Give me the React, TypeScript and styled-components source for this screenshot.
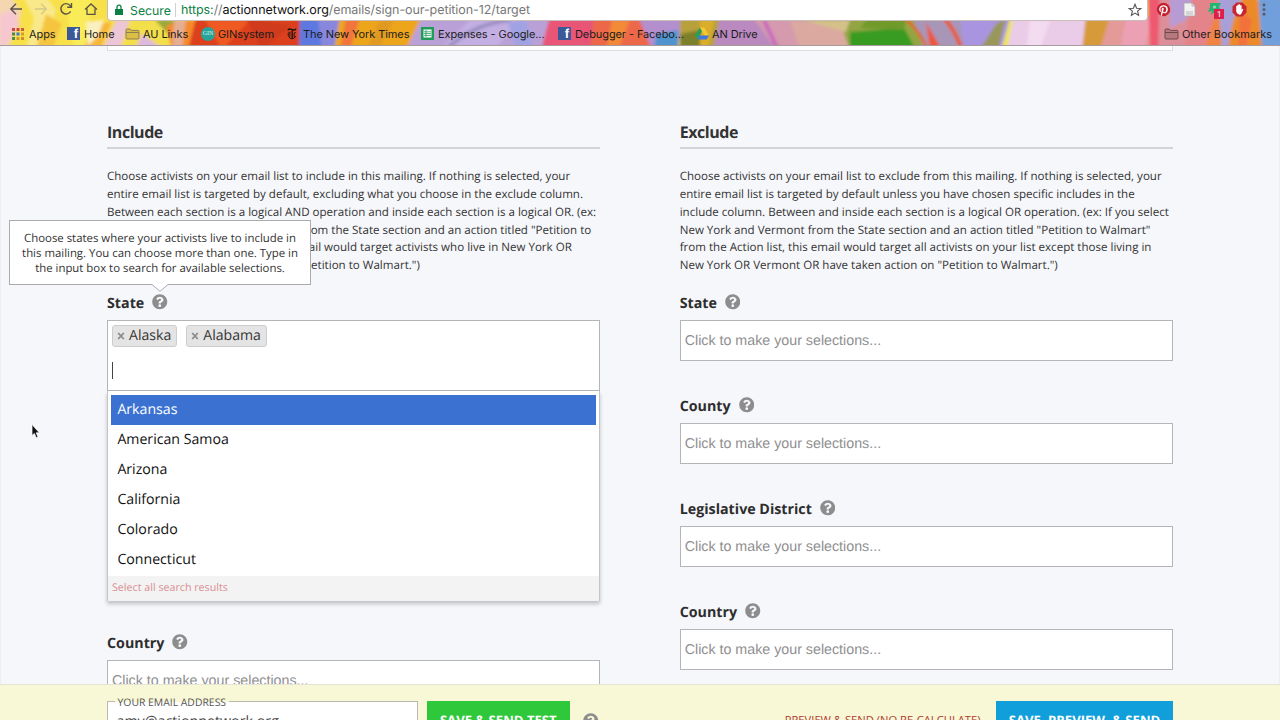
import React from 'react';
import styled, { createGlobalStyle } from 'styled-components';
import { FaQuestionCircle, FaPinterest } from 'react-icons/fa';

const Global = createGlobalStyle`
  * { box-sizing: border-box; }
  body { margin: 0; overflow: hidden; background: #f6f7fb; font-family: "Open Sans", sans-serif; color: #333; text-rendering: geometricPrecision; }
  svg { display: block; flex: none; }
`;

const Screen = styled.div`
  position: relative; width: 1280px; height: 720px; overflow: hidden;
  display: flex; flex-direction: column;
`;

/* ---------- browser chrome ---------- */
const Chrome = styled.header`
  position: relative; flex: none; height: 46px; overflow: hidden;
  border-bottom: 1px solid #a79a9c; font-family: Inter, sans-serif; color: #1c1c1c;
`;
const Theme = styled.svg` position: absolute; inset: 0; `;
const Toolbar = styled.div`
  position: relative; display: flex; height: 21px; align-items: flex-start;
`;
const NavButtons = styled.div`
  width: 107px; height: 18px; display: flex; align-items: center; gap: 9px; padding-left: 8px; flex: none;
`;
const Omnibox = styled.div`
  width: 1041px; height: 21px; background: #fff; border: 1px solid #c9bdb9; border-top: 0;
  border-radius: 0 0 4px 4px; display: flex; align-items: center; padding: 0 5px 1px 6px; flex: none;
`;
const Secure = styled.span` color: #0b8043; font-size: 12.3px; line-height: 17px; padding-top: 1px; width: 45px; margin-left: 6px; white-space: nowrap; `;
const Divider = styled.i` width: 1px; height: 14px; background: #d0d0d0; margin: 0 5px 0 0; `;
const Url = styled.span<{ $ls: number }>`
  flex: 1; font-size: 12.5px; line-height: 17px; padding-top: 1px; letter-spacing: ${p => p.$ls}px; color: #777; white-space: nowrap;
  b { font-weight: 400; color: #111; } em { font-style: normal; color: #0b8043; }
`;
const Extensions = styled.div`
  display: flex; align-items: center; gap: 9px; height: 18px; padding-left: 8px;
`;
const Bookmarks = styled.nav` position: relative; display: flex; height: 25px; padding-left: 11px; `;
const Bookmark = styled.div<{ $w?: number; $ls?: number; $end?: boolean; $gap?: number }>`
  display: flex; align-items: center; gap: ${p => p.$gap ?? 4}px; white-space: nowrap; font-size: 11px;
  width: ${p => (p.$w ? `${p.$w}px` : 'auto')}; letter-spacing: ${p => p.$ls ?? -0.09}px;
  margin-left: ${p => (p.$end ? 'auto' : 0)}; padding-right: ${p => (p.$end ? 8 : 0)}px; flex: none;
`;
const GinBadge = styled.span`
  width: 14px; height: 14px; border-radius: 50%; background: #27a39a; color: #d9f4ef;
  font: 6px/14px "Liberation Serif", serif; text-align: center; letter-spacing: 0;
`;
const FbMark = styled.span`
  width: 13px; height: 13px; background: #3b5998; color: #fff; text-align: right; padding-right: 2px;
  font: bold 13px/14px "Liberation Sans", sans-serif;
`;
const RecordBadge = styled.span`
  position: absolute; left: 7px; top: 7px; width: 10px; height: 10px; background: #dd1f4b; color: #fff;
  font: 8px/10px Inter, sans-serif; text-align: center;
`;
const ExtWrap = styled.span` position: relative; display: block; `;

/* ---------- page ---------- */
const Page = styled.main`
  flex: 1; min-height: 0; overflow: hidden; background: #f6f7fb;
  border: 0 solid #eceef4; border-width: 0 1px; padding: 0 106px;
`;
const PanelEdge = styled.div` height: 5px; background: #fff; border: 1px solid #dcdde0; border-top: 0; `;
const Columns = styled.div` display: grid; grid-template-columns: 493px 493.5px; column-gap: 79.7px; padding-top: 70px; `;
const Column = styled.section` min-width: 0; `;
const Heading = styled.h2`
  margin: 0 0 19px; height: 28px; border-bottom: 2px solid #d3d4d8; line-height: 22px;
  font-size: 16px; font-weight: 700; letter-spacing: -0.45px;
`;
const Copy = styled.p`
  margin: 0 0 17px; font-size: 11.57px; line-height: 17.85px; height: 107px; white-space: nowrap;
`;
const Line = styled.span` display: block; `;
const Label = styled.div`
  position: relative; display: flex; align-items: center; gap: 8px; height: 20px; margin-bottom: 8px; padding-top: 2px;
  font-size: 14.25px; font-weight: 700; color: #2d2d2d; width: max-content;
  svg { color: #8d8d8d; margin-top: -2px; }
`;
const Picker = styled.div`
  height: 41px; background: #fff; border: 1px solid #b4b5b9; padding: 0 4px; margin-bottom: 34px;
  font: 14.25px/40px "Liberation Sans", sans-serif; color: #8f8f8f;
`;
const OpenPicker = styled.div`
  height: 71px; background: #fff; border: 1px solid #b4b5b9; padding: 4px;
`;
const Chips = styled.div` display: flex; gap: 9px; `;
const Chip = styled.span`
  display: flex; align-items: center; gap: 4px; height: 22px; padding: 0 5px 0 4px; border: 1px solid #cdcdcd;
  border-radius: 3px; background: #e4e4e4; font-size: 14.1px; line-height: 21.5px; color: #333; white-space: nowrap;
  svg { color: #8a8a8a; margin-top: -1px; }
`;
const Caret = styled.i` display: block; width: 1px; height: 17px; background: #444; margin-top: 15px; `;
const Menu = styled.div`
  height: 210px; background: #fff; border: 1px solid #c3c4c8; border-top: 0; padding-top: 3.5px;
  box-shadow: 0 3px 4px rgba(0,0,0,.22); margin-bottom: 31px; display: flex; flex-direction: column;
`;
const Option = styled.div<{ $active?: boolean }>`
  height: 30.2px; line-height: 30.9px; margin: 0 3.5px 0 3px; padding-left: 6.4px; font-size: 14.15px;
  color: ${p => (p.$active ? '#fff' : '#111')}; background: ${p => (p.$active ? '#3b72d2' : 'transparent')};
`;
const SelectAll = styled.div`
  flex: 1; background: #f3f3f3; padding-left: 4px; font-size: 10.7px; line-height: 25.5px; color: #d98f92;
`;
const Tooltip = styled.div`
  position: absolute; left: -98px; top: -72px; width: 302px; height: 65px; background: #fff;
  border: 1px solid #ababab; padding: 9.6px 0 0; text-align: center; white-space: nowrap;
  font-size: 11.4px; font-weight: 400; line-height: 15px; color: #333;
  svg { position: absolute; left: 142px; top: 62px; margin: 0; }
`;

/* ---------- action bar ---------- */
const ActionBar = styled.footer`
  flex: none; height: 36px; background: #f8f7d6; border-top: 1px solid #e4e4d9; overflow: hidden;
  display: flex; align-items: flex-start; padding: 16px 107px 0;
`;
const EmailField = styled.div`
  width: 310.5px; height: 40px; background: #fff; border: 1px solid #b9b9b1; position: relative;
  padding: 7px 8.5px; font-size: 14.25px; line-height: 25px; color: #444; flex: none;
`;
const Legend = styled.span`
  position: absolute; left: 6.5px; top: -8px; height: 16px; line-height: 18px; padding: 0 3px; font-size: 10.4px; color: #555;
  background: linear-gradient(#f8f7d6 8px, #fff 8px); white-space: nowrap;
`;
const ActionButton = styled.div<{ $blue?: boolean }>`
  width: ${p => (p.$blue ? 177 : 143.5)}px; height: 40px; color: #fff; text-align: center; flex: none;
  background: ${p => (p.$blue ? '#109fda' : '#2fc83b')}; margin-left: ${p => (p.$blue ? 15.5 : 9)}px;
  font-weight: 700; font-size: 13.1px; line-height: 39px; white-space: nowrap;
`;
const BarHelp = styled.div` margin: 12px 0 0 13px; color: #8d8d8d; `;
const RecalcLink = styled.span` margin-left: auto; font-size: 11.2px; line-height: 39px; color: #b0392f; white-space: nowrap; `;
const Pointer = styled.svg` position: absolute; left: 31px; top: 423px; `;

const Folder = ({ dark }: { dark?: boolean }) => (
  <svg width="15" height="12" viewBox="0 0 15 12" fill={dark ? 'rgba(90,60,60,.28)' : 'rgba(190,150,60,.45)'} stroke={dark ? '#6d4a48' : '#8d7f55'} strokeWidth="1">
    <path d="M1 10V2Q1 1 2 1H5L6.3 2.4H13Q14 2.4 14 3.4V10Q14 11 13 11H2Q1 11 1 10ZM1 4.5H14" />
  </svg>
);
const TimesLogo = () => (
  <svg width="12" height="14" viewBox="0 0 12 14" fill="none" stroke="#111">
    <path d="M2 3.4Q2.4 1.6 4.5 2.2L7.5 3Q9.4 3.4 9.8 1.6" strokeWidth="1.4" />
    <path d="M6.2 3.4V11.5" strokeWidth="1.3" />
    <path d="M3.8 4.6Q1.4 6 2.3 8.6Q3.4 12.2 6.4 11.8Q9.2 11.4 9.6 9M3.9 5V9.4M8 6.2L9.8 5.4M8.2 6V10.2" strokeWidth=".9" />
  </svg>
);
const X = () => (
  <svg width="8" height="8" viewBox="0 0 8 8" stroke="currentColor" strokeWidth="1.8"><path d="M1.2 1L6.8 7M6.8 1L1.2 7" /></svg>
);
const Help = () => <FaQuestionCircle size={15.5} />;
const dots = ['#d4473a', '#d4473a', '#c55', '#4a8a56', '#3b78d8', '#d89b2c', '#4a8a56', '#d89b2c', '#c9902a'];

const ThemeArt = () => (
  <Theme width="1280" height="46" viewBox="0 0 1280 46">
    <defs><filter id="soft"><feGaussianBlur stdDeviation="1.6" /></filter></defs>
    <rect width="1280" height="46" fill="#f7e04a" />
    <g filter="url(#soft)">
      <path d="M-5-5H10L22 12L8 50H-5Z" fill="#f4d6b0" /><path d="M0 15L14 8L20 25L6 46H0Z" fill="#f6c7cf" />
      <path d="M22-5L34 18L26 50H44L56 10L45-5Z" fill="#f9e98a" /><path d="M36 50L46 14L62 24L52 50Z" fill="#f5c53f" />
      <path d="M64-5H92L86 50H74Z" fill="#f9ec58" /><path d="M84 50L92 24L112 22L100 50Z" fill="#f7b73a" />
      <path d="M86 22L104 20L98 36L88 46Z" fill="#fbf0c0" /><path d="M102 50L116 20H130L120 50Z" fill="#edc6d8" />
      <path d="M124 50L132 20H160L176 50Z" fill="#f3de4b" /><path d="M135 50L142 34L165 50Z" fill="#ddb9df" />
      <path d="M155 20H178L168 34Z" fill="#9aa83a" /><path d="M172 50L166 26L180 20H206L215 50Z" fill="#f58a2c" />
      <path d="M174 20H186L182 50H172Z" fill="#e5ad91" />
      <path d="M196 18H302V50H188Z" fill="#dc3f1c" /><path d="M205 20L250 20L222 50Z" fill="#ef5a23" />
      <path d="M246 18L290 26L262 50Z" fill="#cf3a1a" /><path d="M300 16H344L338 50H299Z" fill="#5d79e0" />
      <path d="M318 18L342 16L334 50H322Z" fill="#8987dc" /><path d="M340 16H424L408 50H334Z" fill="#eda51d" />
      <path d="M346 18L360 18L350 50H340Z" fill="#f2743a" /><path d="M380 20L394 20L378 50H366Z" fill="#e09a23" />
      <path d="M422 16H556L544 50H406Z" fill="#b9a1d8" /><path d="M440 50L470 20H520L494 50Z" fill="#c3afe2" />
      <path d="M446 50Q470 25 510 20" stroke="#9b8fc2" strokeWidth="4" fill="none" />
      <path d="M508 22L526 20L534 50H516Z" fill="#a0a2e4" /><path d="M550 16H606L600 50H541Z" fill="#e85476" />
      <path d="M594 18H642L654 50H590Z" fill="#ed6748" /><path d="M612 20L630 20L618 50H606Z" fill="#f28a37" />
      <path d="M638 16H682L678 50H652Z" fill="#b48fce" /><path d="M656 34L678 30V50H654Z" fill="#4f93cf" />
      <path d="M680 16H722L718 50H680Z" fill="#b8a03a" /><path d="M680 34L700 30L702 50H680Z" fill="#7b802c" />
      <path d="M700 20L714 20L708 50H700Z" fill="#dbae2c" /><path d="M720 16H776L790 50H713Z" fill="#b989bf" />
      <path d="M752 16H846L852 50H776Z" fill="#d59aae" /><path d="M764 20L778 50" stroke="#c868bd" strokeWidth="4" />
      <path d="M790 20L850 28V50H800Z" fill="#dba99f" />
      <path d="M800 16H912L926 50H850L842 28Z" fill="#92a542" /><path d="M802 20L846 32L850 20Z" fill="#d4c18a" />
      <path d="M850 32L904 28L916 50H850Z" fill="#379b22" /><path d="M868 18L906 20L904 30L860 28Z" fill="#6f9a2c" />
      <path d="M912 16H962L966 50H924Z" fill="#a796b7" /><path d="M906 20Q918 28 928 50" stroke="#e2662c" strokeWidth="3" fill="none" />
      <path d="M926 22L942 50H930Z" fill="#ed573e" /><path d="M944 18Q955 30 962 50" stroke="#ed5426" strokeWidth="4" fill="none" />
      <path d="M960 16H1014L1004 50H964Z" fill="#a995df" /><path d="M982 46L996 24L1006 18L998 50H980Z" fill="#99975a" />
      <path d="M1010 18L1018 18L1008 50H1001Z" fill="#eee45a" /><path d="M1014 16H1088L1084 50H1007Z" fill="#eacbe8" />
      <path d="M1030 20L1050 20L1040 50H1026Z" fill="#f3dcf0" /><path d="M1086 16H1118L1110 50H1082Z" fill="#d79a3a" />
      <path d="M1110 16H1156L1152 50H1100Z" fill="#e39a98" /><path d="M1126 18H1152L1144 50H1120Z" fill="#eca0b4" />
      <path d="M1148-5H1166L1162 50H1150Z" fill="#ee5870" /><path d="M1160-5H1202L1192 50H1158Z" fill="#dd8f99" />
      <path d="M1170-5H1194L1186 20L1170 28Z" fill="#b79bd4" /><path d="M1192-5H1222L1216 50H1184Z" fill="#e5838a" />
      <path d="M1204 50L1216 12L1226 24L1222 50Z" fill="#f08440" /><path d="M1218-5H1242L1234 50H1222Z" fill="#a7a0d8" />
      <path d="M1244-5H1256Q1266 20 1262 50H1228Q1230 20 1244-5Z" fill="#ec8a2b" />
      <path d="M1240 10L1252 20L1246 50H1238Z" fill="#f2713e" /><path d="M1258-5H1285V50H1262Z" fill="#6f9fdc" />
    </g>
  </Theme>
);

const ask = 'Click to make your selections...';
const Field = ({ name }: { name: string }) => (<><Label>{name}<Help /></Label><Picker>{ask}</Picker></>);

export default function App() {
  return (
    <Screen>
      <Global />
      <Chrome>
        <ThemeArt />
        <Toolbar>
          <NavButtons>
            <svg width="16" height="16" viewBox="0 0 16 16" fill="none" stroke="#5b5347" strokeWidth="1.4"><path d="M14 8H3M8 2.8L2.8 8L8 13.2" /></svg>
            <svg width="16" height="16" viewBox="0 0 16 16" fill="none" stroke="#d3c98b" strokeWidth="1.4"><path d="M2 8H13M8 2.8L13.2 8L8 13.2" /></svg>
            <svg width="16" height="16" viewBox="0 0 16 16" fill="none" stroke="#5b5347" strokeWidth="1.4"><path d="M12.6 10.4A5.2 5.2 0 1 1 12.2 4.6L13.2 6M13.5 2V6.3H9.2" /></svg>
            <svg width="16" height="16" viewBox="0 0 16 16" fill="none" stroke="#5b5347" strokeWidth="1.3"><path d="M2 8.6L8 3L14 8.6M4 7.6V13.4H12V7.6" /></svg>
          </NavButtons>
          <Omnibox>
            <svg width="10" height="12" viewBox="0 0 10 12" fill="#0b8043"><path d="M1 5H9V11H1Z" /><path d="M3 5V3.2A2 2 0 0 1 7 3.2V5" fill="none" stroke="#0b8043" strokeWidth="1.3" /></svg>
            <Secure>Secure</Secure><Divider />
            <Url $ls={-0.08}><em>https:</em>//<b>actionnetwork.org</b>/emails/sign-our-petition-12/target</Url>
            <svg width="14" height="14" viewBox="0 0 14 14" fill="none" stroke="#555" strokeWidth="1.1"><path d="M7 1.2L8.6 5.2L12.8 5.5L9.6 8.2L10.6 12.4L7 10.1L3.4 12.4L4.4 8.2L1.2 5.5L5.4 5.2Z" /></svg>
          </Omnibox>
          <Extensions>
            <svg width="15" height="15" viewBox="0 0 15 15"><circle cx="7.5" cy="7.5" r="6.6" fill="#fff" /><FaPinterest x="0.5" y="0.5" size={14} color="#c51f2d" /></svg>
            <svg width="18" height="15" viewBox="0 0 16 15"><path d="M3 1H11L14 4V14H3Z" fill="#f1f1f1" stroke="#aaa" strokeWidth=".8" /><path d="M5 10H12M5 12H12M11 1V4H14" stroke="#aaa" strokeWidth=".8" fill="none" /></svg>
            <ExtWrap>
              <svg width="16" height="15" viewBox="0 0 16 15" fill="#22b573"><path d="M3 1H14L12 5L14 9L9 8L4 13L5 9L1 10L3 5Z" /><circle cx="7.5" cy="5" r="1.6" fill="#8fdcae" /></svg>
              <RecordBadge>1</RecordBadge>
            </ExtWrap>
            <svg width="15" height="15" viewBox="0 0 15 15"><path d="M4.5.5H10.5L14.5 4.5V10.5L10.5 14.5H4.5L.5 10.5V4.5Z" fill="#c62531" /><path d="M4.2 7V4.2Q4.8 3.3 5.4 4.2V3Q6 2 6.7 3V2.4Q7.5 1.6 8.1 2.6V3.4Q9 2.6 9.6 3.6V8L10.6 6.8Q11.8 6.8 11 8.2L9.3 11.7Q8.5 13 6.8 12.6Q4.3 12 4.2 9Z" fill="#fff" /></svg>
            <svg width="16" height="15" viewBox="0 0 16 15" fill="#5a5360"><circle cx="8" cy="3" r="1.4" /><circle cx="8" cy="7.6" r="1.4" /><circle cx="8" cy="12.2" r="1.4" /></svg>
          </Extensions>
        </Toolbar>
        <Bookmarks>
          <Bookmark $w={56}>
            <svg width="14" height="14" viewBox="0 0 14 14">{dots.map((c, i) => <rect key={i} x={1 + (i % 3) * 4.5} y={1 + Math.floor(i / 3) * 4.5} width="3" height="3" fill={c} />)}</svg>
            Apps
          </Bookmark>
          <Bookmark $w={58}><FbMark>f</FbMark>Home</Bookmark>
          <Bookmark $w={76} $gap={3}><Folder />AU Links</Bookmark>
          <Bookmark $w={85} $gap={3}><GinBadge>GIN</GinBadge>GINsystem</Bookmark>
          <Bookmark $w={135} $gap={5}><TimesLogo />The New York Times</Bookmark>
          <Bookmark $w={137}>
            <svg width="13" height="13" viewBox="0 0 13 13"><rect width="13" height="13" fill="#1f9d58" /><rect x="2.5" y="2.5" width="8" height="8" fill="#fff" /><path d="M3 4.8H10M3 6.6H10M3 8.4H10M5 3V10" stroke="#1f9d58" strokeWidth=".8" /></svg>
            Expenses - Google...
          </Bookmark>
          <Bookmark $w={137}><FbMark>f</FbMark>Debugger - Facebo...</Bookmark>
          <Bookmark $gap={3}>
            <svg width="14" height="13" viewBox="0 0 14 13"><path d="M4.8.5H9.2L14 8.5H9.5Z" fill="#f5c932" /><path d="M4.8.5L7 4.4L2.4 12.5L0 8.5Z" fill="#2b9d5b" /><path d="M4.5 8.5H14L11.6 12.5H2.4Z" fill="#3f78dc" /></svg>
            AN Drive
          </Bookmark>
          <Bookmark $end $gap={3} $ls={-0.03}><Folder dark />Other Bookmarks</Bookmark>
        </Bookmarks>
      </Chrome>

      <Page>
        <PanelEdge />
        <Columns>
          <Column>
            <Heading>Include</Heading>
            <Copy>
              <Line>Choose activists on your email list to include in this mailing. If nothing is selected, your</Line>
              <Line>entire email list is targeted by default, excluding what you choose in the exclude column.</Line>
              <Line>Between each section is a logical AND operation and inside each section is a logical OR. (ex:</Line>
              <Line>If you select New York and Vermont from the State section and an action titled "Petition to</Line>
              <Line>Walmart" from the Action list, this email would target activists who live in New York OR</Line>
              <Line>Vermont AND have taken action on "Petition to Walmart.")</Line>
            </Copy>
            <Label>
              State<Help />
              <Tooltip>
                <Line>Choose states where your activists live to include in</Line>
                <Line>this mailing. You can choose more than one. Type in</Line>
                <Line>the input box to search for available selections.</Line>
                <svg width="16" height="9" viewBox="0 0 16 9" fill="#fff"><path d="M0 0H16V1.5L8 8.3L0 1.5Z" /><path d="M0 1.5L8 8.3L16 1.5" fill="none" stroke="#ababab" /></svg>
              </Tooltip>
            </Label>
            <OpenPicker>
              <Chips><Chip><X />Alaska</Chip><Chip><X />Alabama</Chip></Chips>
              <Caret />
            </OpenPicker>
            <Menu>
              {['Arkansas', 'American Samoa', 'Arizona', 'California', 'Colorado', 'Connecticut'].map((s, i) => (
                <Option key={s} $active={i === 0}>{s}</Option>
              ))}
              <SelectAll>Select all search results</SelectAll>
            </Menu>
            <Field name="Country" />
          </Column>
          <Column>
            <Heading>Exclude</Heading>
            <Copy>
              <Line>Choose activists on your email list to exclude from this mailing. If nothing is selected, your</Line>
              <Line>entire email list is targeted by default unless you have chosen specific includes in the</Line>
              <Line>include column. Between and inside each section is a logical OR operation. (ex: If you select</Line>
              <Line>New York and Vermont from the State section and an action titled "Petition to Walmart"</Line>
              <Line>from the Action list, this email would target all activists on your list except those living in</Line>
              <Line>New York OR Vermont OR have taken action on "Petition to Walmart.")</Line>
            </Copy>
            {['State', 'County', 'Legislative District', 'Country'].map(n => <Field key={n} name={n} />)}
          </Column>
        </Columns>
      </Page>

      <ActionBar>
        <EmailField><Legend>YOUR EMAIL ADDRESS</Legend>amy@actionnetwork.org</EmailField>
        <ActionButton>SAVE &amp; SEND TEST</ActionButton>
        <BarHelp><Help /></BarHelp>
        <RecalcLink>PREVIEW &amp; SEND (NO RE-CALCULATE)</RecalcLink>
        <ActionButton $blue>SAVE, PREVIEW, &amp; SEND</ActionButton>
      </ActionBar>

      <Pointer width="9" height="16" viewBox="0 0 9 16"><path d="M1 1.5V12.5L3.4 10.4L5.2 14.8L7 14L5.2 9.8H8.3Z" fill="#111" stroke="#fff" strokeWidth=".7" /></Pointer>
    </Screen>
  );
}
